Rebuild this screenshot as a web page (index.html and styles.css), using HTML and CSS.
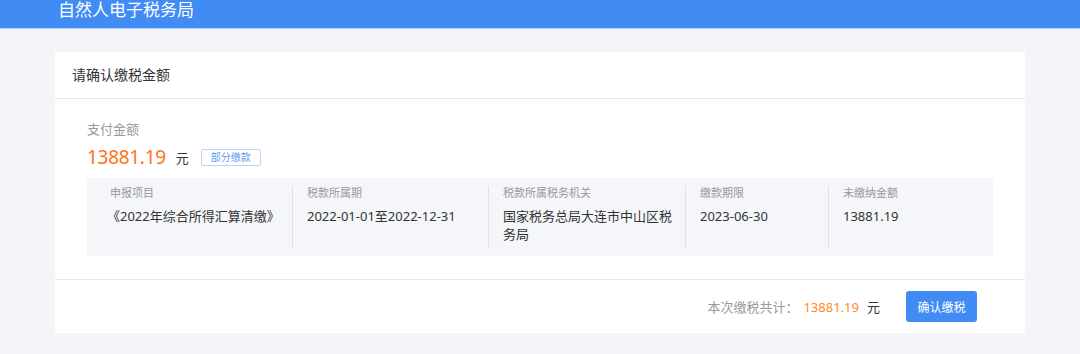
FILE: index.html
```html
<!DOCTYPE html>
<html lang="zh-CN">
<head>
    <meta charset="UTF-8">
    <title>自然人电子税务局</title>
    <link rel="stylesheet" href="styles.css">
</head>
<body>
    <div class="header">
        <div class="title">自然人电子税务局</div>
    </div>

    <div class="main">
        <div class="card">
            <div class="card-header">请确认缴税金额</div>

            <div class="card-body">
                <div class="pay-label">支付金额</div>
                <div class="pay-row">
                    <span class="pay-amount">13881.19</span>
                    <span class="unit">元</span>
                    <span class="badge">部分缴款</span>
                </div>

                <div class="info-table">
                    <div class="col col-first">
                        <div class="col-label">申报项目</div>
                        <div class="col-value shift">《2022年综合所得汇算清缴》</div>
                    </div>
                    <div class="col">
                        <div class="col-label">税款所属期</div>
                        <div class="col-value">2022-01-01至2022-12-31</div>
                    </div>
                    <div class="col">
                        <div class="col-label">税款所属税务机关</div>
                        <div class="col-value">国家税务总局大连市中山区税务局</div>
                    </div>
                    <div class="col">
                        <div class="col-label">缴款期限</div>
                        <div class="col-value">2023-06-30</div>
                    </div>
                    <div class="col">
                        <div class="col-label">未缴纳金额</div>
                        <div class="col-value">13881.19</div>
                    </div>
                </div>
            </div>

            <div class="card-footer">
                <span class="total-label">本次缴税共计：</span>
                <span class="total-amount">13881.19</span>
                <span class="unit">元</span>
                <button class="confirm-btn">确认缴税</button>
            </div>
        </div>
    </div>
</body>
</html>
```

FILE: styles.css
```css
body, html {
    margin: 0;
    font-family: "Noto Sans", "Noto Sans CJK SC", sans-serif;
    background-color: #f4f5f9;
    color: #333;
}

.header {
    height: 28px;
    background-color: #418cf4;
    border-bottom: 1px solid #b3d0fa;
    padding-left: 58px;
    overflow: hidden;
}

.title {
    color: #fff;
    font-size: 17px;
    line-height: 19px;
}

.main {
    padding: 23px 55px 0;
}

.card {
    background-color: #fff;
}

.card-header {
    height: 46px;
    line-height: 46px;
    padding-left: 17px;
    font-size: 14px;
    border-bottom: 1px solid #e6e8ec;
}

.card-body {
    padding: 20px 32px 23px;
    border-bottom: 1px solid #e6e8ec;
}

.pay-label {
    font-size: 13px;
    line-height: 20px;
    color: #999;
}

.pay-row {
    display: flex;
    align-items: center;
    height: 26px;
    margin-top: 5px;
}

.pay-amount {
    font-size: 19px;
    color: #ff7417;
    letter-spacing: -0.3px;
}

.unit {
    font-size: 13px;
    color: #333;
    margin-left: 10px;
}

.badge {
    margin-left: 12px;
    height: 15px;
    line-height: 15px;
    padding: 0 9px;
    border: 1px solid #b9d5fb;
    border-radius: 2px;
    font-size: 10px;
    color: #5a9cf5;
}

.info-table {
    display: grid;
    grid-template-columns: 205px 196px 197px 143px 1fr;
    margin-top: 8px;
    padding: 8px 0;
    background-color: #f4f6fa;
}

.col {
    height: 62px;
    padding-left: 14px;
    border-left: 1px solid #e0e2e6;
}

.col-first {
    padding-left: 23px;
    border-left: none;
}

.col-label {
    font-size: 11px;
    line-height: 14px;
    color: #999;
}

.col-value {
    margin-top: 7px;
    font-size: 13px;
    line-height: 18px;
    width: 170px;
}

.col-value.shift {
    margin-left: -3px;
    width: 190px;
}

.card-footer {
    height: 53px;
    display: flex;
    justify-content: flex-end;
    align-items: center;
    padding-right: 48px;
}

.total-label {
    font-size: 13px;
    color: #999;
}

.total-amount {
    font-size: 13px;
    color: #ff8a2b;
    margin-left: 5px;
}

.card-footer .unit {
    margin-left: 8px;
}

.confirm-btn {
    margin-left: 26px;
    width: 71px;
    height: 31px;
    background-color: #418cf4;
    color: #fff;
    border: none;
    border-radius: 3px;
    font-family: inherit;
    font-size: 12px;
    cursor: pointer;
}
```
